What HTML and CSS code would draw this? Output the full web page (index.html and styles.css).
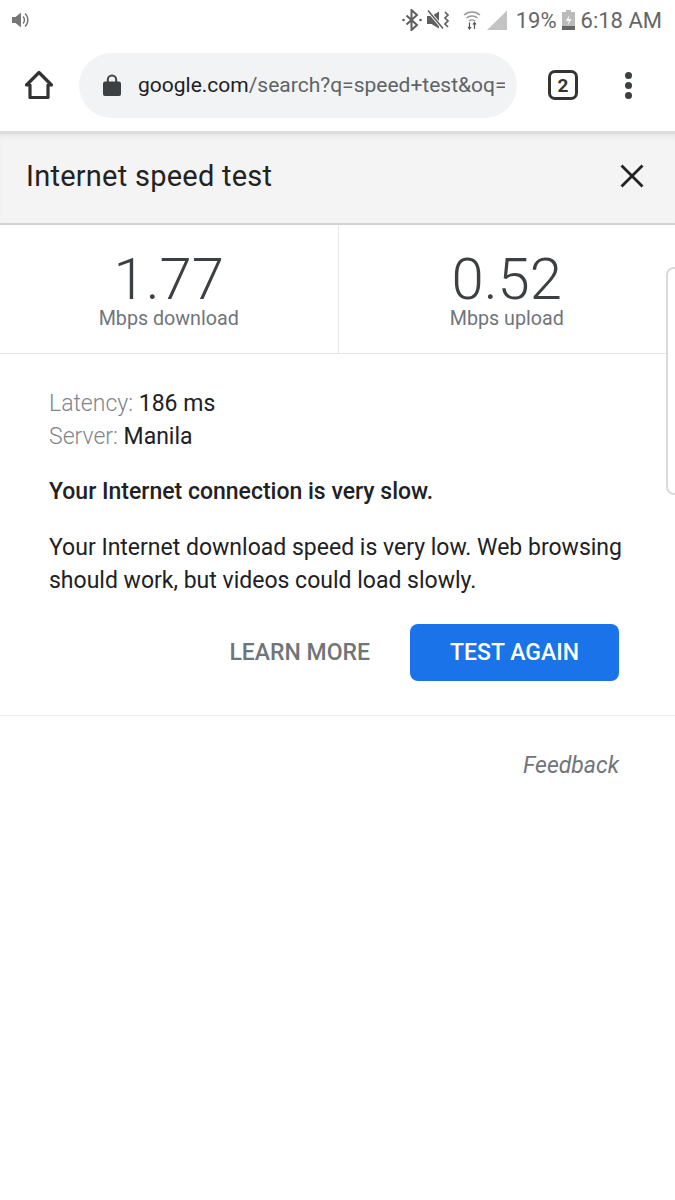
FILE: index.html
```html
<!DOCTYPE html>
<html lang="en">
<head>
<meta charset="utf-8">
<title>Internet speed test</title>
<link rel="stylesheet" href="styles.css">
</head>
<body>
<div class="status">
  <svg width="18" height="18" viewBox="0 0 18 18"><path d="M0 6h3.500L9 1.500v15L3.500 12H0z" fill="#777"/><path d="M11 5.500c2 2 2 5 0 7M13 2.500c3.800 3.500 3.800 9.500 0 13" fill="none" stroke="#777" stroke-width="1.500"/></svg>
  <div class="status-right">
    <svg width="20" height="22" viewBox="0 0 20 22"><path d="M4.500 6.500l10.500 9.500-5.500 5V1l5.500 5-10.500 9.500" fill="none" stroke="#5f5f5f" stroke-width="2"/><circle cx="1.500" cy="11" r="1.300" fill="#5f5f5f"/><circle cx="18.500" cy="11" r="1.300" fill="#5f5f5f"/></svg>
    <svg class="gap-s" width="23" height="22" viewBox="0 0 23 22"><path d="M0 7h4.500L12 2.500v17L4.500 15H0z" fill="#5f5f5f"/><path d="M1 1.500l15 18" stroke="#fff" stroke-width="3.500"/><path d="M1 1.500l15 18" stroke="#5f5f5f" stroke-width="1.500"/><path d="M18 3l3 3-3 3 3 3-3 3 3 3" fill="none" stroke="#5f5f5f" stroke-width="1.700"/></svg>
    <svg class="gap-m" width="18" height="22" viewBox="0 0 18 22"><path d="M1 6c4.500-4 11.500-4 16 0M3.500 9c3-2.600 8-2.600 11 0M6 12c1.600-1.300 4.400-1.300 6 0" fill="none" stroke="#999" stroke-width="1.500"/><path d="M6.500 13.500v6M5 18l1.500 2 1.500-2M11.500 20v-6M10 15.500l1.500-2 1.500 2" fill="none" stroke="#555" stroke-width="1.200"/></svg>
    <svg class="gap-t" width="20" height="22" viewBox="0 0 20 22"><path d="M20 1.500V21H0z" fill="#c4c4c4"/></svg>
    <span class="pct">19%</span>
    <svg class="gap-b" width="13" height="22" viewBox="0 0 13 22"><path d="M4 1h5v2h4v18H0V3h4z" fill="#bbb"/><path d="M0 17h13v4H0z" fill="#666"/><path d="M7.500 5.500l-3.500 6.500h3L5.500 17 9.500 10H6.500z" fill="#fff"/></svg>
    <span class="clock">6:18 AM</span>
  </div>
</div>

<div class="toolbar">
  <svg class="home" width="32" height="32" viewBox="0 0 32 32"><path d="M3.500 16L16 3.500 28.500 16H25v12.500H7V16z" fill="none" stroke="#333" stroke-width="3.200" stroke-linejoin="round"/></svg>
  <div class="omnibox">
    <svg class="lock" width="20" height="24" viewBox="0 0 20 24"><path d="M5.800 9V6.700a4.200 4.200 0 018.400 0V9" fill="none" stroke="#3c4043" stroke-width="2"/><rect x="1" y="8.500" width="18" height="14.500" rx="2" fill="#3c4043"/></svg>
    <div class="url"><span class="host">google.com</span>/search?q=speed+test&amp;oq=</div>
  </div>
  <div class="tabs">2</div>
  <div class="menu"><i></i><i></i><i></i></div>
</div>

<div class="title-bar">
  <div class="title">Internet speed test</div>
  <svg width="24" height="24" viewBox="0 0 24 24"><path d="M1.500 1.500l21 21M22.500 1.500l-21 21" stroke="#222" stroke-width="2.800" fill="none"/></svg>
</div>

<div class="stats">
  <div class="stat">
    <div class="value">1.77</div>
    <div class="label">Mbps download</div>
  </div>
  <div class="stat stat-second">
    <div class="value">0.52</div>
    <div class="label">Mbps upload</div>
  </div>
  <div class="side-tab"></div>
</div>

<div class="result">
  <div class="meta"><span class="key">Latency:</span> 186 ms</div>
  <div class="meta"><span class="key">Server:</span> Manila</div>
  <p class="headline">Your Internet connection is very slow.</p>
  <p class="desc">Your Internet download speed is very low. Web browsing should work, but videos could load slowly.</p>
  <div class="actions">
    <span class="learn">LEARN MORE</span>
    <span class="again">TEST AGAIN</span>
  </div>
</div>

<div class="feedback">Feedback</div>
</body>
</html>
```
FILE: styles.css
```css
* { box-sizing: border-box; }
html, body { margin: 0; padding: 0; }
body {
  width: 675px;
  height: 1200px;
  overflow: hidden;
  background: #fff;
  font-family: Roboto, "Liberation Sans", sans-serif;
  color: #202124;
}
.status {
  height: 42px;
  display: flex;
  align-items: center;
  justify-content: space-between;
  padding: 0 13px 2px 12px;
}
.status-right { display: flex; align-items: center; }
.gap-s { margin-left: 5px; }
.gap-m { margin-left: 13px; }
.gap-t { margin-left: 6px; }
.gap-b { margin: 0 6px 0 5px; }
.pct, .clock { font-size: 22px; color: #666; }
.pct { margin-left: 9px; }
.toolbar {
  height: 89px;
  display: flex;
  align-items: center;
  padding-bottom: 3px;
}
.home { margin-left: 23px; flex: none; }
.omnibox {
  width: 438px;
  height: 65px;
  margin-left: 24px;
  border-radius: 33px;
  background: #f1f3f4;
  display: flex;
  align-items: center;
  padding-left: 23px;
}
.lock { flex: none; }
.url {
  margin-left: 16px;
  width: 367px;
  overflow: hidden;
  white-space: nowrap;
  font-size: 21px;
  color: #5f6368;
}
.host { color: #202124; }
.tabs {
  width: 30px;
  height: 30px;
  margin-left: 31px;
  border: 3px solid #333;
  border-radius: 7px;
  font-size: 19px;
  font-weight: 700;
  color: #333;
  display: flex;
  align-items: center;
  justify-content: center;
}
.menu {
  margin-left: 47px;
  display: flex;
  flex-direction: column;
  gap: 3px;
}
.menu i { display: block; width: 7px; height: 7px; border-radius: 50%; background: #3c4043; }
.title-bar {
  height: 94px;
  background: #f4f4f4;
  border-top: 3px solid #dcdcdc;
  border-bottom: 2px solid #d2d2d2;
  box-shadow: inset 0 5px 5px -3px #e4e4e4;
  display: flex;
  align-items: center;
  justify-content: space-between;
  padding: 0 31px 5px 26px;
}
.title { font-size: 29px; color: #222; letter-spacing: 0.25px; }
.stats {
  position: relative;
  height: 129px;
  display: flex;
  border-bottom: 1px solid #e6e6e6;
}
.stat {
  width: 338px;
  text-align: center;
  padding-top: 26px;
}
.stat-second { border-left: 1px solid #e6e6e6; }
.value {
  font-size: 58px;
  font-weight: 300;
  line-height: 56px;
  color: #3c4043;
}
.label {
  font-size: 19.700px;
  line-height: 22px;
  margin-top: 1px;
  color: #70757a;
}
.side-tab {
  position: absolute;
  left: 666px;
  top: 42px;
  width: 20px;
  height: 228px;
  border: 2px solid #dadada;
  border-radius: 8px;
  background: #fff;
  z-index: 1;
}
.result {
  padding: 33px 50px 34px 49px;
  border-bottom: 1px solid #ececec;
  font-size: 23px;
  line-height: 33px;
  height: 362px;
}
.key { color: #80868b; font-weight: 300; }
.meta { color: #202124; }
.headline { margin: 22px 0 0; font-weight: 500; }
.desc { margin: 23px 0 0; }
.actions {
  display: flex;
  justify-content: flex-end;
  align-items: center;
  margin-top: 27px;
  margin-right: 6px;
}
.learn {
  font-size: 23px;
  font-weight: 500;
  color: #70757a;
}
.again {
  width: 209px;
  height: 57px;
  margin-left: 40px;
  background: #1a73e8;
  border-radius: 8px;
  color: #fff;
  font-size: 23px;
  font-weight: 500;
  display: flex;
  align-items: center;
  justify-content: center;
}
.feedback {
  padding: 34px 56px 0 0;
  text-align: right;
  font-size: 23px;
  line-height: 32px;
  font-style: italic;
  color: #70757a;
}
```
